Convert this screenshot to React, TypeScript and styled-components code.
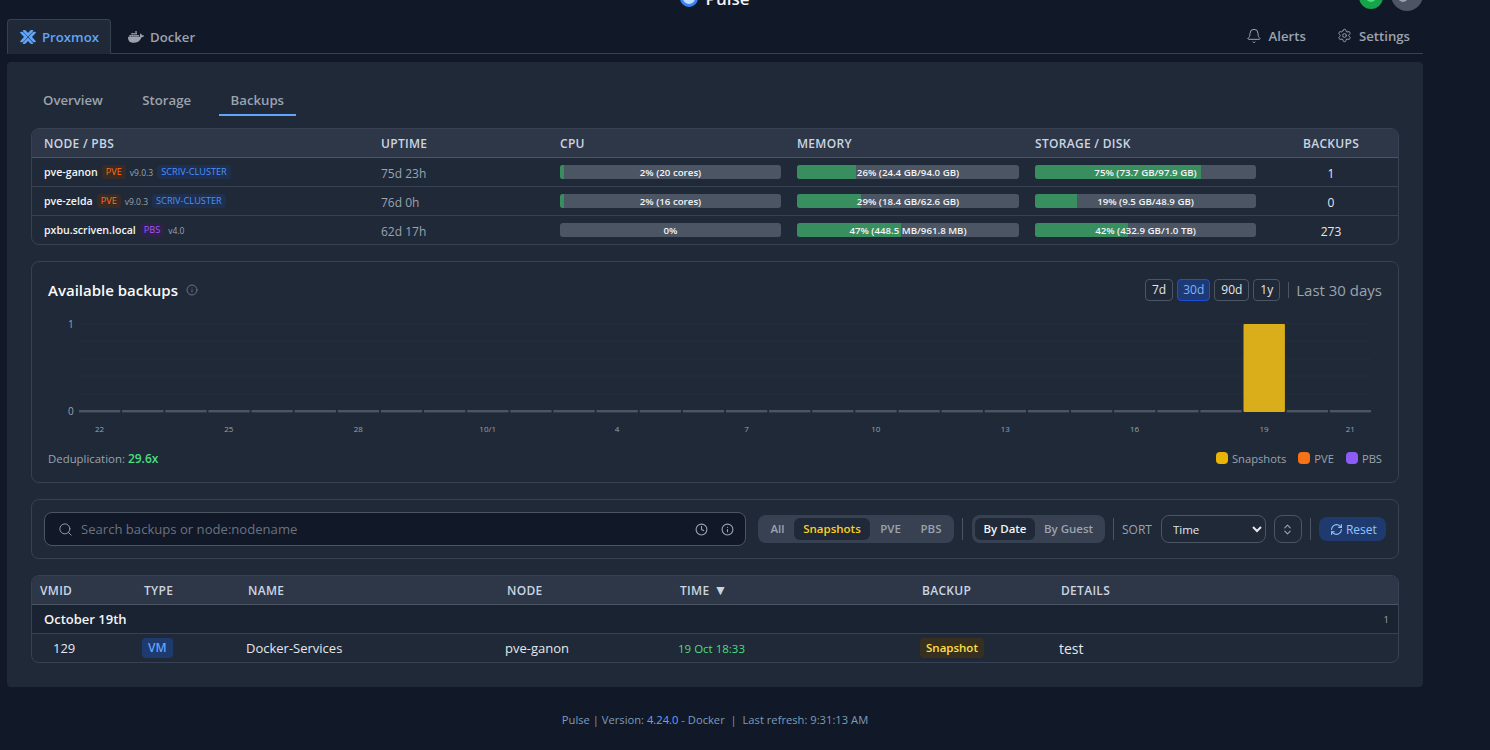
import React from "react";
import styled, { createGlobalStyle } from "styled-components";
import { Bell, Settings, Search, Clock, Info, RefreshCw, ChevronsUpDown } from "lucide-react";
import { SiProxmox, SiDocker } from "react-icons/si";

const Global = createGlobalStyle`
  html, body { margin: 0; padding: 0; background: #111827; height: 750px; overflow: hidden; }
  * { box-sizing: border-box; }
  body { font-family: "Open Sans", "Noto Sans", "Liberation Sans", sans-serif; color: #e5e7eb; }
`;

const Page = styled.div`
  width: 1416px;
  margin-left: 7px;
`;

const TopBar = styled.header`
  display: grid;
  grid-template-columns: 1fr auto 1fr;
  align-items: end;
  height: 40px;
  margin-top: -29px;
`;
const Brand = styled.div`
  display: flex;
  align-items: center;
  gap: 7px;
  grid-column: 2;
  height: 18px;
  margin-bottom: 4px;
  font-size: 17px;
  font-weight: 600;
  color: #f3f4f6;
`;
const BrandMark = styled.span`
  width: 18px;
  height: 18px;
  border-radius: 50%;
  border: 3px solid #3b82f6;
  background: #bfdbfe;
`;
const StatusGroup = styled.div`
  grid-column: 3;
  display: flex;
  justify-content: flex-end;
  align-items: flex-end;
  gap: 8px;
`;
const StatusDot = styled.span<{ $bg: string; $size: number; $dot: string; $up: number; $dx: number; $dy: number }>`
  position: relative;
  width: ${(p) => p.$size}px;
  height: ${(p) => p.$size}px;
  margin-bottom: ${(p) => p.$up}px;
  border-radius: 50%;
  background: ${(p) => p.$bg};
  &::after {
    content: "";
    position: absolute;
    left: 50%;
    top: 50%;
    width: 10px;
    height: 10px;
    margin: ${(p) => p.$dy - 5}px 0 0 ${(p) => p.$dx - 5}px;
    border-radius: 50%;
    background: ${(p) => p.$dot};
  }
`;

const TabRow = styled.nav`
  display: flex;
  align-items: flex-end;
  height: 35px;
  margin-top: 8px;
  border-bottom: 1px solid #374151;
`;
const PlatformTab = styled.div<{ $active?: boolean }>`
  display: flex;
  align-items: center;
  gap: 6px;
  height: 35px;
  padding: 0 11px 0 12px;
  margin-bottom: -1px;
  font-size: 13.2px;
  font-weight: 600;
  color: ${(p) => (p.$active ? "#60a5fa" : "#9ca3af")};
  background: ${(p) => (p.$active ? "#1f2937" : "transparent")};
  border: 1px solid ${(p) => (p.$active ? "#374151" : "transparent")};
  border-bottom: 1px solid ${(p) => (p.$active ? "#1f2937" : "transparent")};
  border-radius: 4px 4px 0 0;
  & + & { margin-left: 4px; }
`;
const DockerMark = styled(SiDocker)`
  color: #9ca3af;
`;
const RightTabs = styled.div`
  margin-left: auto;
  display: flex;
  height: 35px;
  align-items: center;
  gap: 31px;
  padding-right: 13px;
`;
const RightTab = styled.div`
  display: flex;
  align-items: center;
  gap: 7px;
  font-size: 13.2px;
  font-weight: 600;
  color: #9ca3af;
`;

const Panel = styled.main`
  margin-top: 8px;
  height: 625px;
  padding: 24px;
  background: #1f2937;
  border-radius: 4px;
`;
const SubNav = styled.div`
  display: flex;
  gap: 15.5px;
  height: 30px;
  margin-bottom: 12px;
`;
const SubTab = styled.div<{ $active?: boolean }>`
  padding: 0 12px;
  font-size: 13.2px;
  line-height: 28px;
  font-weight: 600;
  color: #9ca3af;
  border-bottom: 2px solid ${(p) => (p.$active ? "#60a5fa" : "transparent")};
`;

const Card = styled.section`
  border: 1px solid #374151;
  border-radius: 8px;
  overflow: hidden;
  & + & { margin-top: 16px; }
`;
const NodeGrid = styled.div`
  display: grid;
  grid-template-columns: 337px 179px 237px 238px 237px 1fr;
  align-items: center;
  height: 29px;
  border-bottom: 1px solid #374151;
  &:last-child { border-bottom: 0; height: 28px; }
`;
const NodeHead = styled(NodeGrid)`
  background: #2d3748;
  border-bottom-color: #4b5563;
`;
const HeadCell = styled.div<{ $center?: boolean }>`
  padding-left: ${(p) => (p.$center ? 4 : 12)}px;
  font-size: 12px;
  font-weight: 600;
  letter-spacing: 0.3px;
  color: #cbd5e1;
  white-space: nowrap;
  text-align: ${(p) => (p.$center ? "center" : "left")};
`;
const NodeCell = styled.div`
  display: flex;
  align-items: center;
  gap: 4px;
  padding-left: 12px;
  white-space: nowrap;
  font-size: 10.6px;
`;
const NodeName = styled.span`
  font-weight: 600;
  color: #f3f4f6;
`;
const Tag = styled.span<{ $fg: string; $bg: string }>`
  padding: 1px 4px;
  font-size: 9.2px;
  line-height: 12px;
  font-weight: 500;
  border-radius: 3px;
  color: ${(p) => p.$fg};
  background: ${(p) => p.$bg};
`;
const Version = styled.span`
  font-size: 8.5px;
  color: #9ca3af;
`;
const Uptime = styled.div`
  padding-left: 12px;
  padding-top: 2px;
  font-size: 12px;
  color: #9ca3af;
`;
const MeterCell = styled.div`
  padding: 0 4px 0 12px;
`;
const Meter = styled.div`
  position: relative;
  height: 14px;
  border-radius: 3px;
  overflow: hidden;
  background: #4b5563;
`;
const MeterFill = styled.div`
  height: 100%;
  background: #388e5f;
`;
const MeterLabel = styled.span`
  position: absolute;
  inset: 0;
  text-align: center;
  font-size: 9.7px;
  line-height: 15px;
  font-weight: 600;
  color: #f3f4f6;
  white-space: nowrap;
`;
const Count = styled.div`
  padding: 2px 0 0 4px;
  text-align: center;
  font-size: 12px;
  color: #e5e7eb;
`;

const ChartCard = styled(Card)`
  height: 222px;
  padding: 17px 16px 0;
`;
const ChartHead = styled.div`
  display: flex;
  align-items: center;
  height: 22px;
`;
const ChartTitle = styled.h2`
  margin: 0;
  font-size: 15px;
  font-weight: 600;
  color: #f9fafb;
`;
const TitleInfo = styled(Info)`
  margin-left: 8px;
  color: #6b7280;
`;
const RangeGroup = styled.div`
  margin-left: auto;
  display: flex;
  align-items: center;
  gap: 4px;
`;
const RangeButton = styled.div<{ $active?: boolean }>`
  height: 22px;
  padding: 0 ${(p) => (p.$active ? 5 : 6)}px;
  font-size: 12px;
  line-height: 20px;
  font-weight: 500;
  border-radius: 4px;
  color: ${(p) => (p.$active ? "#7db4fb" : "#e5e7eb")};
  background: ${(p) => (p.$active ? "#1e3a76" : "transparent")};
  border: 1px solid ${(p) => (p.$active ? "#1d4ed8" : "#4b5563")};
`;
const RangeDivider = styled.span`
  width: 1px;
  height: 16px;
  margin: 0 3px 0 4px;
  background: #4b5563;
`;
const RangeLabel = styled.span`
  font-size: 15px;
  color: #9ca3af;
`;
const ChartSvg = styled.svg`
  display: block;
  width: 1334px;
  height: 125px;
  margin-top: 14px;
`;
const AxisY = styled.text`
  font-size: 10px;
  fill: #9ca3af;
  font-family: "Open Sans", sans-serif;
`;
const AxisX = styled.text`
  font-size: 8px;
  fill: #9ca3af;
  font-family: "Open Sans", sans-serif;
`;
const ChartFoot = styled.div`
  display: flex;
  align-items: center;
  margin-top: 10px;
  height: 16px;
  font-size: 11.4px;
  color: #9ca3af;
`;
const Dedup = styled.strong`
  margin-left: 3px;
  font-size: 12px;
  font-weight: 600;
  color: #4ade80;
`;
const Legend = styled.div`
  margin-left: auto;
  display: flex;
  gap: 12px;
  font-size: 11.2px;
`;
const LegendItem = styled.span`
  display: flex;
  align-items: center;
  gap: 4px;
`;
const Swatch = styled.i<{ $c: string }>`
  width: 12px;
  height: 12px;
  border-radius: 4px;
  background: ${(p) => p.$c};
`;

const FilterCard = styled(Card)`
  display: flex;
  align-items: center;
  height: 60px;
  padding: 0 12px;
`;
const SearchBox = styled.div`
  flex: 0 0 702px;
  display: flex;
  align-items: center;
  height: 34px;
  padding: 0 11px 0 13px;
  background: #111827;
  border: 1px solid #4b5563;
  border-radius: 8px;
  color: #9ca3af;
`;
const SearchText = styled.span`
  flex: 1;
  margin-left: 8px;
  font-size: 13.1px;
  color: #6b7280;
`;
const SearchClock = styled(Clock)`
  margin-right: 13px;
`;
const Segments = styled.div`
  display: flex;
  align-items: center;
  height: 28px;
  padding: 3px;
  background: #374151;
  border-radius: 8px;
`;
const FirstSegments = styled(Segments)`
  margin-left: 12px;
`;
const Segment = styled.div<{ $active?: boolean; $fg?: string; $w: number }>`
  width: ${(p) => p.$w}px;
  height: 22px;
  text-align: center;
  font-size: 11.5px;
  line-height: 22px;
  font-weight: 600;
  border-radius: 6px;
  color: ${(p) => p.$fg || "#9ca3af"};
  background: ${(p) => (p.$active ? "#1f2937" : "transparent")};
`;
const VLine = styled.span<{ $m: string }>`
  width: 1px;
  height: 22px;
  margin: ${(p) => p.$m};
  background: #4b5563;
`;
const SortLabel = styled.span`
  font-size: 12px;
  font-weight: 500;
  color: #9ca3af;
`;
const SortSelect = styled.select`
  width: 105px;
  height: 28px;
  margin-left: 9px;
  padding: 0 6px 0 7px;
  font-family: inherit;
  font-size: 11.5px;
  color: #e5e7eb;
  color-scheme: dark;
  background: #1f2937;
  border: 1px solid #4b5563;
  border-radius: 8px;
`;
const SortToggle = styled.div`
  display: flex;
  align-items: center;
  justify-content: center;
  width: 28px;
  height: 28px;
  margin-left: 8px;
  border: 1px solid #4b5563;
  border-radius: 8px;
  color: #9ca3af;
`;
const ResetButton = styled.div`
  display: flex;
  align-items: center;
  gap: 3px;
  height: 24px;
  padding: 0 9px 0 11px;
  font-size: 12px;
  font-weight: 500;
  color: #93c5fd;
  background: #1e3a6e;
  border-radius: 8px;
`;

const BackupGrid = styled.div`
  display: grid;
  grid-template-columns: 104px 104px 259px 173px 242px 139px 1fr;
  align-items: center;
  height: 29px;
  &:last-child { height: 28px; }
`;
const BackupHead = styled(BackupGrid)`
  background: #2d3748;
  border-bottom: 1px solid #4b5563;
`;
const BackupHeadCell = styled.div`
  padding-left: 8px;
  font-size: 12px;
  font-weight: 600;
  letter-spacing: 0.3px;
  color: #cbd5e1;
`;
const SortArrow = styled.span`
  margin-left: 4px;
  font-size: 14px;
  line-height: 12px;
`;
const DateRow = styled.div`
  display: flex;
  align-items: center;
  justify-content: space-between;
  height: 29px;
  padding: 0 9px 0 12px;
  background: #1a2332;
  border-bottom: 1px solid #374151;
`;
const DateTitle = styled.span`
  font-size: 13px;
  font-weight: 600;
  color: #f3f4f6;
`;
const DateCount = styled.span`
  font-size: 9.5px;
  color: #9ca3af;
`;
const BackupCell = styled.div<{ $fg?: string; $size?: number; $pad?: number }>`
  padding-left: ${(p) => p.$pad ?? 6}px;
  font-size: ${(p) => p.$size ?? 13}px;
  color: ${(p) => p.$fg || "#e5e7eb"};
  white-space: nowrap;
`;
const Pill = styled.span<{ $fg: string; $bg: string; $size: number }>`
  display: inline-block;
  padding: 0 6px;
  height: 20px;
  line-height: 20px;
  font-size: ${(p) => p.$size}px;
  font-weight: 600;
  border-radius: 4px;
  color: ${(p) => p.$fg};
  background: ${(p) => p.$bg};
`;

const Footer = styled.footer`
  margin-top: 25px;
  text-align: center;
  font-size: 11.2px;
  line-height: 16px;
  color: #7c9cbc;
`;
const FooterVersion = styled.span`
  color: #60a5fa;
`;

const nodes = [
  { name: "pve-ganon", type: "PVE", version: "v9.0.3", cluster: "SCRIV-CLUSTER", uptime: "75d 23h", cpu: [2, "2% (20 cores)"], mem: [26.5, "26% (24.4 GB/94.0 GB)"], disk: [75, "75% (73.7 GB/97.9 GB)"], backups: 1 },
  { name: "pve-zelda", type: "PVE", version: "v9.0.3", cluster: "SCRIV-CLUSTER", uptime: "76d 0h", cpu: [2, "2% (16 cores)"], mem: [29, "29% (18.4 GB/62.6 GB)"], disk: [19, "19% (9.5 GB/48.9 GB)"], backups: 0 },
  { name: "pxbu.scriven.local", type: "PBS", version: "v4.0", cluster: "", uptime: "62d 17h", cpu: [0, "0%"], mem: [47, "47% (448.5 MB/961.8 MB)"], disk: [42, "42% (432.9 GB/1.0 TB)"], backups: 273 },
] as const;

const xLabels: Record<number, string> = { 0: "22", 3: "25", 6: "28", 9: "10/1", 12: "4", 15: "7", 18: "10", 21: "13", 24: "16", 27: "19", 29: "21" };

const Bar = ({ value, label }: { value: number; label: string }) => (
  <MeterCell>
    <Meter>
      <MeterFill style={{ width: `${value}%` }} />
      <MeterLabel>{label}</MeterLabel>
    </Meter>
  </MeterCell>
);

const Chart = () => (
  <ChartSvg viewBox="0 0 1334 125">
    {[9, 26, 44, 61, 79].map((y) => (
      <line key={y} x1="31" x2="1323" y1={y} y2={y} stroke="#253040" strokeWidth="1" />
    ))}
    <AxisY x="20" y="12.5" textAnchor="start">1</AxisY>
    <AxisY x="20" y="100" textAnchor="start">0</AxisY>
    {Array.from({ length: 30 }, (_, i) => {
      const x = 31 + i * 43.13;
      return i === 27 ? (
        <rect key={i} x={x} y="9" width="41.4" height="88" rx="1" fill="#d9ae1a" />
      ) : (
        <rect key={i} x={x} y="95" width="41.3" height="2.4" fill="#4b5563" />
      );
    })}
    {Object.entries(xLabels).map(([i, t]) => (
      <AxisX key={i} x={31 + Number(i) * 43.13 + 20.5} y="117" textAnchor="middle">{t}</AxisX>
    ))}
  </ChartSvg>
);

export default function App() {
  return (
    <Page>
      <Global />
      <TopBar>
        <Brand>
          <BrandMark />
          Pulse
        </Brand>
        <StatusGroup>
          <StatusDot $bg="#16a34a" $size={24} $dot="#4ade80" $up={2} $dx={0} $dy={0} />
          <StatusDot $bg="#4b5563" $size={32} $dot="#9ca3af" $up={0} $dx={-4} $dy={2} />
        </StatusGroup>
      </TopBar>
      <TabRow>
        <PlatformTab $active>
          <SiProxmox size={16} />
          Proxmox
        </PlatformTab>
        <PlatformTab>
          <DockerMark size={16} />
          Docker
        </PlatformTab>
        <RightTabs>
          <RightTab>
            <Bell size={16} strokeWidth={1.5} />
            Alerts
          </RightTab>
          <RightTab>
            <Settings size={15} strokeWidth={1.5} />
            Settings
          </RightTab>
        </RightTabs>
      </TabRow>
      <Panel>
        <SubNav>
          <SubTab>Overview</SubTab>
          <SubTab>Storage</SubTab>
          <SubTab $active>Backups</SubTab>
        </SubNav>
        <Card>
          <NodeHead>
            <HeadCell>NODE / PBS</HeadCell>
            <HeadCell>UPTIME</HeadCell>
            <HeadCell>CPU</HeadCell>
            <HeadCell>MEMORY</HeadCell>
            <HeadCell>STORAGE / DISK</HeadCell>
            <HeadCell $center>BACKUPS</HeadCell>
          </NodeHead>
          {nodes.map((n) => (
            <NodeGrid key={n.name}>
              <NodeCell>
                <NodeName>{n.name}</NodeName>
                {n.type === "PVE" ? (
                  <Tag $fg="#f97316" $bg="#3a2a25">{n.type}</Tag>
                ) : (
                  <Tag $fg="#a855f7" $bg="#2e2347">{n.type}</Tag>
                )}
                <Version>{n.version}</Version>
                {n.cluster && <Tag $fg="#4b93fb" $bg="#1e2f4f">{n.cluster}</Tag>}
              </NodeCell>
              <Uptime>{n.uptime}</Uptime>
              <Bar value={n.cpu[0]} label={n.cpu[1]} />
              <Bar value={n.mem[0]} label={n.mem[1]} />
              <Bar value={n.disk[0]} label={n.disk[1]} />
              <Count>{n.backups}</Count>
            </NodeGrid>
          ))}
        </Card>
        <ChartCard>
          <ChartHead>
            <ChartTitle>Available backups</ChartTitle>
            <TitleInfo size={12} />
            <RangeGroup>
              <RangeButton>7d</RangeButton>
              <RangeButton $active>30d</RangeButton>
              <RangeButton>90d</RangeButton>
              <RangeButton>1y</RangeButton>
              <RangeDivider />
              <RangeLabel>Last 30 days</RangeLabel>
            </RangeGroup>
          </ChartHead>
          <Chart />
          <ChartFoot>
            Deduplication:
            <Dedup>29.6x</Dedup>
            <Legend>
              <LegendItem><Swatch $c="#eab308" />Snapshots</LegendItem>
              <LegendItem><Swatch $c="#f97316" />PVE</LegendItem>
              <LegendItem><Swatch $c="#8b5cf6" />PBS</LegendItem>
            </Legend>
          </ChartFoot>
        </ChartCard>
        <FilterCard>
          <SearchBox>
            <Search size={15} strokeWidth={1.5} />
            <SearchText>Search backups or node:nodename</SearchText>
            <SearchClock size={13} />
            <Info size={13} />
          </SearchBox>
          <FirstSegments>
            <Segment $w={33}>All</Segment>
            <Segment $w={76} $active $fg="#fbcf24">Snapshots</Segment>
            <Segment $w={41}>PVE</Segment>
            <Segment $w={40}>PBS</Segment>
          </FirstSegments>
          <VLine $m="0 9px 0 8px" />
          <Segments>
            <Segment $w={60} $active $fg="#f3f4f6">By Date</Segment>
            <Segment $w={67}>By Guest</Segment>
          </Segments>
          <VLine $m="0 8px 0 8px" />
          <SortLabel>SORT</SortLabel>
          <SortSelect defaultValue="Time">
            <option>Time</option>
          </SortSelect>
          <SortToggle>
            <ChevronsUpDown size={13} />
          </SortToggle>
          <VLine $m="0 8px 0 8px" />
          <ResetButton>
            <RefreshCw size={13} />
            Reset
          </ResetButton>
        </FilterCard>
        <Card>
          <BackupHead>
            <BackupHeadCell>VMID</BackupHeadCell>
            <BackupHeadCell>TYPE</BackupHeadCell>
            <BackupHeadCell>NAME</BackupHeadCell>
            <BackupHeadCell>NODE</BackupHeadCell>
            <BackupHeadCell>TIME<SortArrow>▼</SortArrow></BackupHeadCell>
            <BackupHeadCell>BACKUP</BackupHeadCell>
            <BackupHeadCell>DETAILS</BackupHeadCell>
          </BackupHead>
          <DateRow>
            <DateTitle>October 19th</DateTitle>
            <DateCount>1</DateCount>
          </DateRow>
          <BackupGrid>
            <BackupCell $pad={21}>129</BackupCell>
            <BackupCell $pad={6}><Pill $fg="#60a5fa" $bg="#1e3a6e" $size={12}>VM</Pill></BackupCell>
            <BackupCell>Docker-Services</BackupCell>
            <BackupCell>pve-ganon</BackupCell>
            <BackupCell $fg="#4ade80" $size={11.5}>19 Oct 18:33</BackupCell>
            <BackupCell><Pill $fg="#fde047" $bg="#38301f" $size={11.5}>Snapshot</Pill></BackupCell>
            <BackupCell $size={14}>test</BackupCell>
          </BackupGrid>
        </Card>
      </Panel>
      <Footer>
        Pulse | Version: <FooterVersion>4.24.0</FooterVersion> - Docker &nbsp;|&nbsp; Last refresh: 9:31:13 AM
      </Footer>
    </Page>
  );
}
